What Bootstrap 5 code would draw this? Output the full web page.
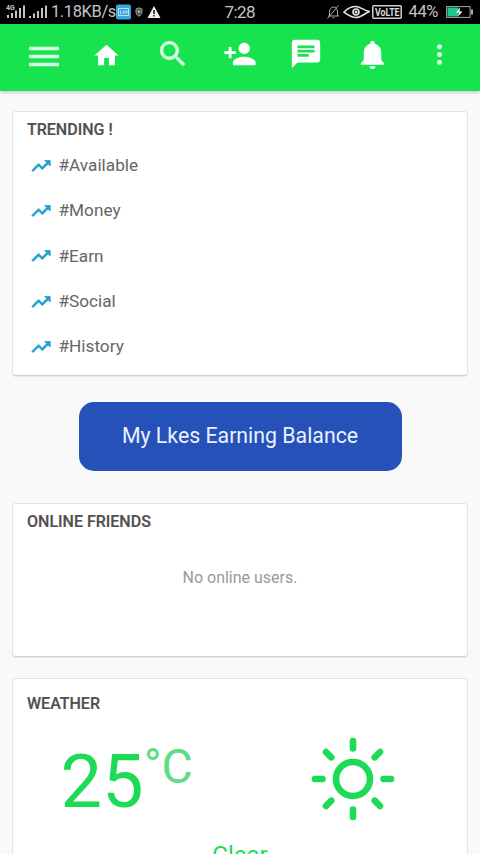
<!DOCTYPE html>
<html lang="en">
<head>
<meta charset="utf-8">
<meta name="viewport" content="width=device-width, initial-scale=1">
<title>Home</title>
<link href="https://cdn.jsdelivr.net/npm/bootstrap@5.3.0/dist/css/bootstrap.min.css" rel="stylesheet">
<style>
html,body{height:854px;overflow:hidden}
body{background:#f9f9f9;font-family:Roboto,"Liberation Sans",sans-serif;color:#666}
svg{display:block;flex:none}
.status{height:24px;background:#000;color:#c4c4c4;font-size:17px;line-height:24px;padding-left:6px;padding-right:7px}
.side{width:50%}
.rate{margin-left:4px;font-size:16.5px;letter-spacing:-.4px}
.clock{margin-left:-15px;letter-spacing:-.6px}
.shield{margin:0 4px 0 4px}
.warn{margin-right:79px}
.eye{margin:0 2px 0 3px}
.pct{margin:0 8px 0 7px;font-size:16.5px;letter-spacing:-.4px}
.appbar{height:66.5px;background:#17e34f;padding:0 0 6px 10.5px;box-shadow:0 1px 4px rgba(0,0,0,.25)}
.slot{width:66.5px;flex:none;color:#fff}
.slot svg{margin-right:7px}
.slot .burger{margin:6px 0 0}
.slot .house{margin:3px 8px 0 0}
.panel{border:1px solid #e2e2e2;border-bottom-color:#d0d0d0;border-radius:4px;box-shadow:0 1px 1px rgba(0,0,0,.07);margin:0 12px}
.title{font-size:16px;font-weight:500;color:#505050;line-height:20px;margin:0 0 0 14px;-webkit-text-stroke:.2px #505050}
.trend{height:265px;margin-top:20.5px;padding-top:7.5px}
.tag{height:45.4px;font-size:17.2px;padding-left:17px;gap:6.5px}
.tags{margin-top:3.5px}
.earn{width:323px;height:69px;margin:25.5px auto 0;background:#2551b9;border:0;border-radius:15px;color:#e9f2ff;font-size:21.3px}
.online{height:154px;margin-top:32px;padding-top:8px}
.none{font-size:16px;color:#999;margin-top:34px}
.weather{height:200px;margin-top:21px;padding-top:15px}
.wrow{height:120px;color:#1ddb56}
.deg{font-size:74px;line-height:80px;margin-left:47.5px;margin-top:28px}
.unit{font-size:48px;line-height:50px;color:#5ddd86;margin-top:28.5px;margin-left:0}
.sun{margin:23px 0 0 118px}
.cond{font-size:24px;line-height:28px;color:#1ddb56;margin-top:7px}
</style>
</head>
<body>
<div class="status d-flex">
  <div class="side d-flex align-items-center">
    <svg width="41" height="20" viewBox="0 0 41 20" fill="#c4c4c4"><text x="0" y="8" font-size="7" font-weight="700">4G</text><path d="M1 13h2v3H1zM5 11h2v5H5zM9 8.500h2V16H9zM13 6h2v10h-2zM17 3.500h2V16h-2zM23 14h2v2h-2zM27 11.500h2V16h-2zM31 9h2v7h-2zM35 6h2v10h-2zM39 3.500h2V16h-2z"/></svg>
    <span class="rate">1.18KB/s</span>
    <svg class="ms-auto" width="15" height="16" viewBox="0 0 15 16"><rect width="15" height="15" y=".5" rx="2" fill="#39a7dc"/><rect x="2.500" y="4.500" width="10" height="7" fill="none" stroke="#b5e2f5"/><path d="M4.500 6.500v3h1.500M7.500 7v2.500M9 9.500V7h2v2.500" fill="none" stroke="#d6effa" stroke-width=".8"/></svg>
    <svg class="shield" width="8" height="10" viewBox="0 0 8 10"><path d="M4 .8 7 2v3c0 2-1.200 3.400-3 4.200C2.200 8.400 1 7 1 5V2z" fill="#555" stroke="#999"/><circle cx="4" cy="4.600" r="1.200" fill="#bbb"/></svg>
    <svg class="warn" width="14" height="12" viewBox="0 0 13 12"><path d="M6.500 0 13 12H0z" fill="#eee"/><path d="M5.800 4h1.400v4H5.800zM5.800 9h1.400v1.500H5.800z" fill="#000"/></svg>
  </div>
  <div class="side d-flex align-items-center">
    <span class="clock">7:28</span>
    <svg class="ms-auto" width="13" height="14" viewBox="0 0 13 14" fill="none" stroke="#a8a8a8" stroke-width="1"><path d="M1 11h11M2.500 11V7c0-3 1.500-5 4-5s4 2 4 5v4M5.500 12.800h2M.5 13.500 11.500.5"/></svg>
    <svg class="eye" width="27" height="14" viewBox="0 0 27 14" fill="none" stroke="#e4e4e4" stroke-width="1.600"><path d="M1 7C5 2.800 9 1.500 13 1.500S19.500 5 26.500 6.500C22 8 18 12.500 13 12.500S5 10 1 7z"/><circle cx="13" cy="7" r="3"/><circle cx="13" cy="7" r=".7"/></svg>
    <svg width="30" height="14" viewBox="0 0 30 14"><rect x=".8" y=".8" width="28.400" height="12.400" rx="1" fill="none" stroke="#d0d0d0" stroke-width="1.500"/><text x="3" y="10.700" font-size="10" font-weight="700" fill="#ddd" textLength="24.500" lengthAdjust="spacingAndGlyphs">VoLTE</text></svg>
    <span class="pct">44%</span>
    <svg width="27" height="12" viewBox="0 0 27 12"><rect x=".6" y=".6" width="23.500" height="10.800" fill="none" stroke="#aaa"/><path d="M1.500 1.500h11v9h-11z" fill="#1fc98a"/><path d="M25 3.500h2v5h-2z" fill="#aaa"/><path d="m14 1.500-4 5h3l-1 4 4.500-5h-3z" fill="#fff"/></svg>
  </div>
</div>

<nav class="appbar d-flex align-items-center position-relative">
  <div class="slot d-flex justify-content-center"><svg class="burger" width="30" height="22" viewBox="0 0 30 22" fill="#d5ffe0"><path d="M0 .75h30v3.500H0zM0 8.750h30v3.500H0zM0 16.750h30v3.500H0z"/></svg></div>
  <div class="slot d-flex justify-content-center"><svg class="house" width="29" height="29" viewBox="0 0 24 24" fill="#fff"><path d="M10 20v-6h4v6h5v-8h3L12 3 2 12h3v8z"/></svg></div>
  <div class="slot d-flex justify-content-center"><svg width="34" height="34" viewBox="0 0 24 24" fill="#d5ffe0" stroke="#d5ffe0" stroke-width=".4"><path d="M15.500 14h-.79l-.28-.27C15.410 12.590 16 11.110 16 9.500 16 5.910 13.090 3 9.500 3S3 5.910 3 9.500 5.910 16 9.500 16c1.610 0 3.090-.59 4.230-1.570l.27.28v.79l5 4.990L20.490 19l-4.990-5zm-6 0C7.010 14 5 11.990 5 9.500S7.010 5 9.500 5 14 7.010 14 9.500 11.990 14 9.500 14z"/></svg></div>
  <div class="slot d-flex justify-content-center"><svg width="34" height="34" viewBox="0 0 24 24" fill="#fff"><path d="M15 12c2.210 0 4-1.790 4-4s-1.790-4-4-4-4 1.790-4 4 1.790 4 4 4zm-9-2V7H4v3H1v2h3v3h2v-3h3v-2H6zm9 4c-2.670 0-8 1.340-8 4v2h16v-2c0-2.660-5.330-4-8-4z"/></svg></div>
  <div class="slot d-flex justify-content-center"><svg width="34" height="34" viewBox="0 0 24 24" fill="#fff"><path d="M20 2H4c-1.100 0-1.990.9-1.990 2L2 22l4-4h14c1.100 0 2-.9 2-2V4c0-1.100-.9-2-2-2zM6 9h12v2H6V9zm8 5H6v-2h8v2zm4-6H6V6h12v2z"/></svg></div>
  <div class="slot d-flex justify-content-center"><svg width="35" height="35" viewBox="0 0 24 24" fill="#fff"><path d="M12 22c1.100 0 2-.9 2-2h-4c0 1.100.9 2 2 2zm6-6v-5c0-3.070-1.640-5.640-4.500-6.320V4c0-.83-.67-1.500-1.500-1.500s-1.500.67-1.500 1.500v.68C7.630 5.360 6 7.920 6 11v5l-2 2v1h16v-1l-2-2z"/></svg></div>
  <div class="slot d-flex justify-content-center"><svg width="31" height="31" viewBox="0 0 24 24" fill="#d5ffe0"><path d="M12 8c1.100 0 2-.9 2-2s-.9-2-2-2-2 .9-2 2 .9 2 2 2zm0 2c-1.100 0-2 .9-2 2s.9 2 2 2 2-.9 2-2-.9-2-2-2zm0 6c-1.100 0-2 .9-2 2s.9 2 2 2 2-.9 2-2-.9-2-2-2z"/></svg></div>
</nav>

<svg width="0" height="0" class="d-none"><symbol id="up" viewBox="0 0 24 24"><path fill="#22a2d3" stroke="#22a2d3" stroke-width=".9" d="M16 6l2.290 2.290-4.880 4.880-4-4L2 16.590 3.410 18l6-6 4 4 6.300-6.290L22 12V6z"/></symbol></svg>

<section class="card panel trend">
  <h2 class="title">TRENDING !</h2>
  <div class="tags">
    <div class="tag d-flex align-items-center"><svg width="22" height="22"><use href="#up"/></svg><span>#Available</span></div>
    <div class="tag d-flex align-items-center"><svg width="22" height="22"><use href="#up"/></svg><span>#Money</span></div>
    <div class="tag d-flex align-items-center"><svg width="22" height="22"><use href="#up"/></svg><span>#Earn</span></div>
    <div class="tag d-flex align-items-center"><svg width="22" height="22"><use href="#up"/></svg><span>#Social</span></div>
    <div class="tag d-flex align-items-center"><svg width="22" height="22"><use href="#up"/></svg><span>#History</span></div>
  </div>
</section>

<button class="btn earn d-block" type="button">My Lkes Earning Balance</button>

<section class="card panel online">
  <h2 class="title">ONLINE FRIENDS</h2>
  <p class="none text-center mb-0">No online users.</p>
</section>

<section class="card panel weather">
  <h2 class="title">WEATHER</h2>
  <div class="wrow d-flex align-items-start">
    <span class="deg">25</span><span class="unit">°C</span>
    <svg class="sun" width="84" height="84" viewBox="-42 -42 84 84" fill="none" stroke="#1ddb56" stroke-width="6.600" stroke-linecap="round"><circle r="17"/><path d="M0-38v7.500M0 38v-7.500M-38 0h7.500M38 0h-7.500M-27-27l5.300 5.300M27-27l-5.300 5.300M-27 27l5.300-5.300M27 27l-5.300-5.300"/></svg>
  </div>
  <div class="cond text-center">Clear</div>
</section>
<script src="https://cdn.jsdelivr.net/npm/bootstrap@5.3.0/dist/js/bootstrap.bundle.min.js"></script>
</body>
</html>
